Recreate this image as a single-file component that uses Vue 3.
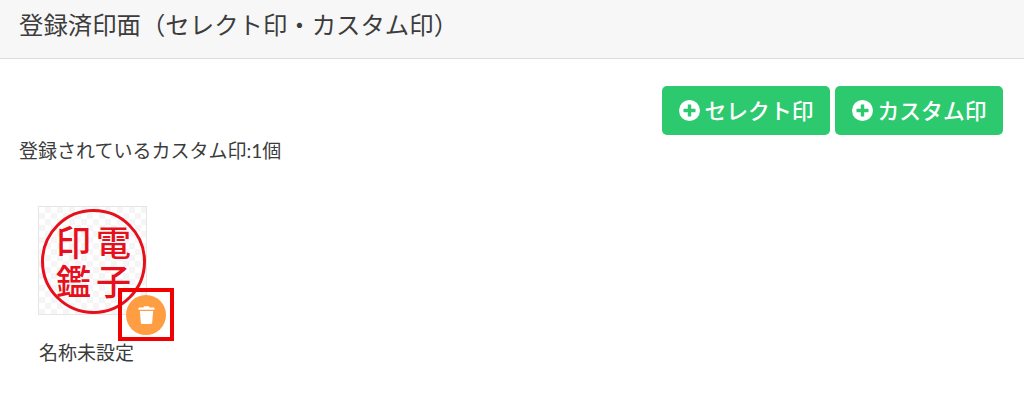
<script setup>
const buttons = ['セレクト印', 'カスタム印']
</script>

<template>
  <div class="page">
    <header class="head">登録済印面（セレクト印・カスタム印）</header>
    <section class="body">
      <div class="actions">
        <button v-for="b in buttons" :key="b" class="btn">
          <svg class="plus" viewBox="0 0 21 21" aria-hidden="true">
            <circle cx="10.5" cy="10.5" r="10.5" fill="#fff" />
            <path d="M8.8 4.5h3.4v4.3h4.3v3.4h-4.3v4.3H8.8v-4.3H4.5V8.8h4.3z" fill="#2dc96f" />
          </svg>
          <span>{{ b }}</span>
        </button>
      </div>
      <p class="count">登録されているカスタム印:1個</p>
      <figure class="item">
        <div class="stamp">
          <div class="ring">
            <span>電</span><span>印</span><span>子</span><span>鑑</span>
          </div>
          <div class="mark">
            <div class="del">
              <svg viewBox="0 0 20 22" aria-hidden="true">
                <path d="M7.2 0.6h5.6l.8 1.7h4.9a.9.9 0 0 1 .9.9v1.5H.5V3.2a.9.9 0 0 1 .9-.9h4.9z" fill="#fff" />
                <path d="M2.2 6.2h15.6l-1.1 14a1.7 1.7 0 0 1-1.7 1.5H5a1.7 1.7 0 0 1-1.7-1.5z" fill="#fff" />
              </svg>
            </div>
          </div>
        </div>
        <figcaption class="name">名称未設定</figcaption>
      </figure>
    </section>
  </div>
</template>

<style>
html, body { margin: 0; background: #fff; }
</style>

<style scoped>
.page {
  width: 1024px;
  height: 404px;
  overflow: hidden;
  background: #fff;
  color: #3c3c3c;
  font-family: Lato, "Noto Sans CJK JP", sans-serif;
}
.head {
  box-sizing: border-box;
  height: 59px;
  padding: 8px 19px 0;
  background: #f7f7f7;
  border-bottom: 1px solid #dcdcdc;
  font-size: 24.4px;
  line-height: 34px;
  white-space: nowrap;
}
.body {
  padding: 27px 21px 0 19px;
}
.actions {
  display: flex;
  justify-content: flex-end;
  gap: 5px;
}
.btn {
  display: flex;
  align-items: center;
  justify-content: center;
  gap: 5px;
  box-sizing: border-box;
  width: 168px;
  height: 49px;
  padding: 0;
  border: 0;
  border-radius: 5px;
  background: #2dc96f;
  color: #fff;
  font: 500 21.8px/1 Lato, "Noto Sans CJK JP", sans-serif;
}
.plus {
  width: 21px;
  height: 21px;
  flex: none;
}
.count {
  margin: 1px 0 0;
  font-size: 19px;
  line-height: 30px;
}
.item {
  margin: 40px 0 0 19px;
  width: 110px;
}
.stamp {
  position: relative;
  box-sizing: border-box;
  width: 109px;
  height: 109px;
  border: 1px solid #e6e6e6;
  background-color: #fff;
  background-image:
    linear-gradient(45deg, #f5f5f5 25%, transparent 25%, transparent 75%, #f5f5f5 75%),
    linear-gradient(45deg, #f5f5f5 25%, transparent 25%, transparent 75%, #f5f5f5 75%);
  background-size: 12px 12px;
  background-position: 0 0, 6px 6px;
}
.ring {
  position: absolute;
  left: 2px;
  top: 2px;
  box-sizing: border-box;
  width: 105px;
  height: 105px;
  border: 3px solid #e60f1c;
  border-radius: 50%;
  display: grid;
  grid-template-columns: 40px 40px;
  grid-template-rows: 39px 39px;
  justify-content: center;
  align-content: center;
  direction: rtl;
  color: #e60f1c;
  font-size: 35px;
  line-height: 39px;
  font-weight: 500;
  text-align: center;
}
.mark {
  position: absolute;
  left: 79px;
  top: 81px;
  box-sizing: border-box;
  width: 56px;
  height: 53px;
  border: 4px solid #f00000;
  display: flex;
  align-items: center;
  justify-content: center;
}
.del {
  width: 40px;
  height: 40px;
  flex: none;
  border-radius: 50%;
  background: #ff9d42;
  display: flex;
  align-items: center;
  justify-content: center;
}
.del svg {
  width: 17px;
  height: 20px;
}
.name {
  margin: 24px 0 0 1px;
  font-size: 19px;
  line-height: 28px;
  white-space: nowrap;
}
</style>
